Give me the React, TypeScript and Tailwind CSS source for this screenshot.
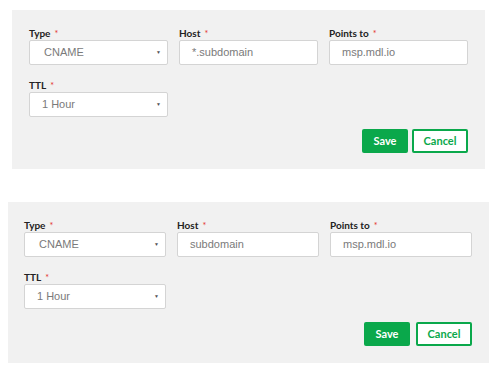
import React from 'react';

interface FormProps {
  host: string;
  colW: number;
  className: string;
  btnGap: string;
  btnTop: string;
}

const labelCls =
  "block h-[13px] text-[10px] leading-[12px] font-bold text-[#222] font-['Lato','Open_Sans',sans-serif]";
const boxCls =
  "h-[25px] bg-white border border-[#d4d4d4] rounded-[2px] flex items-center text-[11px] text-[#7a7a7a] font-['Liberation_Sans',Arial,sans-serif]";

function Label({ text }: { text: string }) {
  return (
    <label className={labelCls}>
      {text}
      <span className="ml-[4px] text-[#e4312b] font-normal text-[9px]">*</span>
    </label>
  );
}

function Select({ value, indent }: { value: string; indent: string }) {
  return (
    <div className={`${boxCls} justify-between pr-[6px]`}>
      <span className={indent}>{value}</span>
      <span className="text-[5px] text-[#555]">▼</span>
    </div>
  );
}

function DnsForm({ host, colW, className, btnGap, btnTop }: FormProps) {
  return (
    <div className={`bg-[#f1f1f1] pt-[17px] ${className}`}>
      <div className="grid gap-x-[11px] gap-y-[14px]" style={{ gridTemplateColumns: `repeat(3, ${colW}px)` }}>
        <div>
          <Label text="Type" />
          <Select value="CNAME" indent="pl-[14px]" />
        </div>
        <div>
          <Label text="Host" />
          <div className={`${boxCls} pl-[12px]`}>{host}</div>
        </div>
        <div>
          <Label text="Points to" />
          <div className={`${boxCls} pl-[12px]`}>msp.mdl.io</div>
        </div>
        <div>
          <Label text="TTL" />
          <Select value="1 Hour" indent="pl-[12px]" />
        </div>
      </div>
      <div className={`flex justify-end ${btnGap} ${btnTop}`}>
        <button className="h-[24px] w-[46px] bg-[#0aa84b] rounded-[2px] text-white text-[11px] font-bold font-['Lato','Open_Sans',sans-serif]">
          Save
        </button>
        <button className="h-[24px] w-[56px] bg-white border-2 border-[#0aa84b] rounded-[2px] text-[#0aa84b] text-[11px] font-bold font-['Lato','Open_Sans',sans-serif]">
          Cancel
        </button>
      </div>
    </div>
  );
}

export default function App() {
  return (
    <div className="w-[498px] h-[376px] bg-white">
      <div className="pt-[10px] pl-[12px]">
        <DnsForm
          host="*.subdomain"
          colW={139}
          className="w-[473px] pl-[17px] pr-[17px] pb-[16px]"
          btnGap="gap-[4px]"
          btnTop="mt-[12px]"
        />
      </div>
      <div className="pt-[33px] pl-[8px]">
        <DnsForm
          host="subdomain"
          colW={142}
          className="w-[481px] pl-[16px] pr-[17px] pb-[17px]"
          btnGap="gap-[6px]"
          btnTop="mt-[13px]"
        />
      </div>
    </div>
  );
}
